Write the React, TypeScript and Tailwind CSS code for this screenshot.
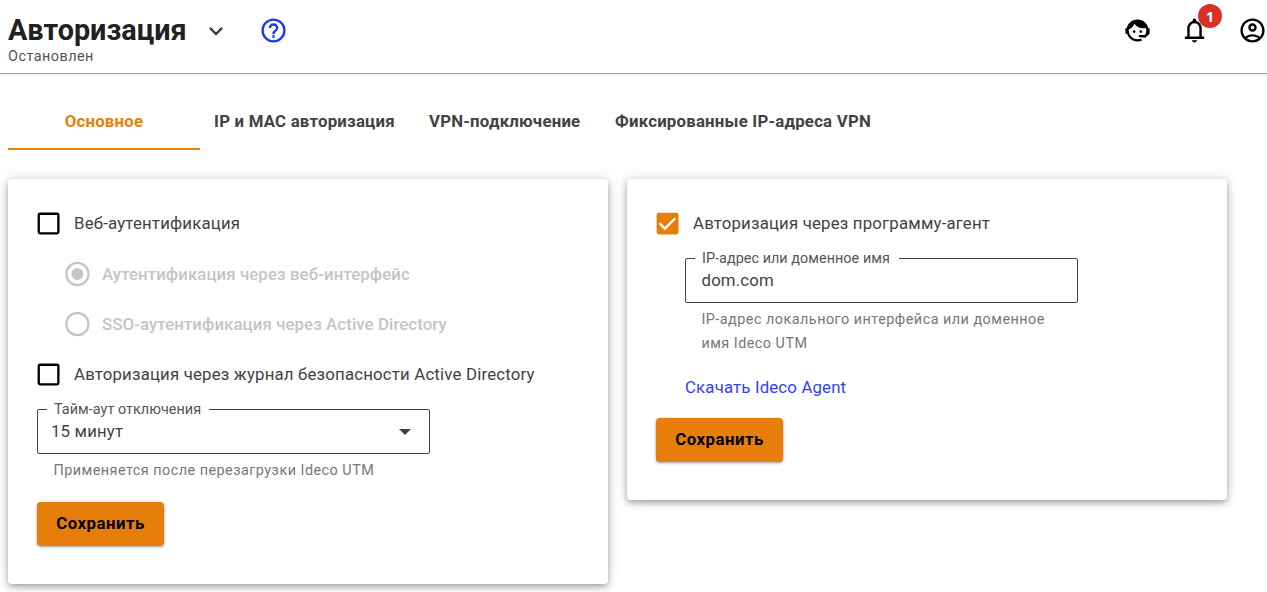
import React from "react";

const ICONS = {
  help: "M11,18H13V16H11V18M12,2A10,10 0 0,0 2,12A10,10 0 0,0 12,22A10,10 0 0,0 22,12A10,10 0 0,0 12,2M12,20C7.59,20 4,16.41 4,12C4,7.59 7.59,4 12,4C16.41,4 20,7.59 20,12C20,16.41 16.41,20 12,20M12,6A4,4 0 0,0 8,10H10A2,2 0 0,1 12,8A2,2 0 0,1 14,10C14,12 11,11.75 11,15H13C13,12.75 16,12.5 16,10A4,4 0 0,0 12,6Z",
  chevron: "M7.41 8.59 12 13.17l4.59-4.58L18 10l-6 6-6-6 1.41-1.41z",
  agent: "M18.72,14.76C19.07,13.91 19.26,13 19.26,12C19.26,11.28 19.15,10.59 18.96,9.95C18.31,10.1 17.63,10.18 16.92,10.18C13.86,10.18 11.15,8.67 9.5,6.34C8.61,8.5 6.91,10.26 4.77,11.22C4.73,11.47 4.73,11.74 4.73,12A7.27,7.27 0 0,0 12,19.27C13.05,19.27 14.06,19.04 14.97,18.63C15.54,19.72 15.8,20.26 15.78,20.26C14.14,20.81 12.87,21.08 12,21.08C9.58,21.08 7.27,20.13 5.57,18.42C4.53,17.38 3.76,16.11 3.33,14.73H2V10.18H3.09C3.93,6.04 7.6,2.92 12,2.92C14.4,2.92 16.71,3.87 18.42,5.58C19.69,6.84 20.54,8.45 20.89,10.18H22V14.67H22V14.69L22,14.73H21.94L18.38,18L13.08,17.4V15.73H17.91L18.72,14.76M9.27,11.77C9.57,11.77 9.86,11.89 10.07,12.11C10.28,12.32 10.4,12.61 10.4,12.91C10.4,13.21 10.28,13.5 10.07,13.71C9.86,13.92 9.57,14.04 9.27,14.04C8.64,14.04 8.13,13.54 8.13,12.91C8.13,12.28 8.64,11.77 9.27,11.77M14.72,11.77C15.35,11.77 15.85,12.28 15.85,12.91C15.85,13.54 15.35,14.04 14.72,14.04C14.09,14.04 13.58,13.54 13.58,12.91A1.14,1.14 0 0,1 14.72,11.77Z",
  bell: "M4 19v-2h2v-7q0-2.075 1.25-3.687Q8.5 4.7 10.5 4.2v-.7q0-.625.438-1.062Q11.375 2 12 2t1.063.438q.437.437.437 1.062v.7q2 .5 3.25 2.113Q18 7.925 18 10v7h2v2Zm8 3q-.825 0-1.412-.587Q10 20.825 10 20h4q0 .825-.587 1.413Q12.825 22 12 22Zm-4-5h8v-7q0-1.65-1.175-2.825Q13.65 6 12 6q-1.65 0-2.825 1.175Q8 8.35 8 10Z",
  account: "M12 2C6.48 2 2 6.48 2 12s4.48 10 10 10 10-4.48 10-10S17.52 2 12 2zM7.35 18.5C8.66 17.56 10.26 17 12 17s3.34.56 4.65 1.5C15.34 19.44 13.74 20 12 20s-3.34-.56-4.65-1.5zm10.79-1.38C16.45 15.8 14.32 15 12 15s-4.45.8-6.14 2.12C4.7 15.73 4 13.95 4 12c0-4.42 3.58-8 8-8s8 3.58 8 8c0 1.95-.7 3.73-1.86 5.12zM12 6c-1.93 0-3.5 1.57-3.5 3.5S10.07 13 12 13s3.5-1.57 3.5-3.5S13.93 6 12 6zm0 5c-.83 0-1.5-.67-1.5-1.5S11.17 8 12 8s1.5.67 1.5 1.5S12.83 11 12 11z",
};

function Icon({ d, className }: { d: string; className: string }) {
  return (
    <svg viewBox="0 0 24 24" fill="currentColor" className={`block shrink-0 ${className}`}>
      <path d={d} />
    </svg>
  );
}

function Checkbox({ label, checked = false }: { label: string; checked?: boolean }) {
  return (
    <label className="flex h-6 items-center pt-px">
      <svg viewBox="0 0 23 23" fill="none" className="size-[23px] shrink-0">
        {checked ? (
          <>
            <rect x="0.6" y="0.8" width="21.9" height="21.7" rx="2.4" fill="#e77e0a" />
            <path d="M3.6 11.3 8.9 16.6 19.2 6.2" stroke="#fff" strokeWidth="2.3" />
          </>
        ) : (
          <rect x="1.75" y="1.75" width="19.6" height="19.6" rx="1.3" stroke="#000" strokeWidth="2.3" />
        )}
      </svg>
      <span className="ml-[14px] text-[16.8px] tracking-[0.011em] whitespace-nowrap text-[#424242]">{label}</span>
    </label>
  );
}

function Radio({ label, checked = false }: { label: string; checked?: boolean }) {
  return (
    <label className="flex h-6 items-center text-[#c4c4c4]">
      <svg viewBox="0 0 25 25" fill="none" className="size-[25px] shrink-0">
        <circle cx="12.4" cy="12" r="11.1" stroke="currentColor" strokeWidth="2.2" />
        {checked && <circle cx="12.4" cy="12" r="6" fill="currentColor" />}
      </svg>
      <span className="ml-3 pt-px text-[16.8px] font-medium tracking-[0.1px] whitespace-nowrap">{label}</span>
    </label>
  );
}

function Field({ label, labelClass, children }: { label: string; labelClass: string; children: React.ReactNode }) {
  return (
    <div className="relative flex h-[45px] w-[393px] items-center rounded-[2px] border border-[#424242]">
      <span className={`absolute -top-[9px] left-[9px] bg-white pl-[7px] text-[14.4px] leading-[18px] tracking-[0.04px] whitespace-nowrap text-[#555] ${labelClass}`}>
        {label}
      </span>
      {children}
    </div>
  );
}

function SaveButton() {
  return (
    <button className="block h-11 w-[127px] rounded-[4px] bg-[#e77e0a] text-[16.8px] font-bold tracking-[0.5px] text-black shadow-[0_1px_3px_rgba(0,0,0,0.4)]">
      Сохранить
    </button>
  );
}

const card = "w-[600px] rounded-[4px] bg-white pl-[29px] pt-8 shadow-[0_3px_6px_rgba(0,0,0,0.3),0_0_14px_rgba(0,0,0,0.14)]";

export default function App() {
  return (
    <div className="h-[592px] w-full overflow-hidden bg-white font-['Roboto',sans-serif] text-[#424242]">
      <header className="flex h-[74px] items-start justify-between border-b border-[#a5a5a5] pl-2 shadow-[0_1px_2px_rgba(0,0,0,0.1)]">
        <div>
          <div className="flex h-[46px] items-center pt-[15px]">
            <h1 className="w-[193px] pb-0.5 text-[28.8px] leading-8 font-bold whitespace-nowrap text-[#212121]">Авторизация</h1>
            <Icon d={ICONS.chevron} className="ml-px size-7" />
            <Icon d={ICONS.help} className="ml-[28.5px] size-[29px] text-[#1a35ff]" />
          </div>
          <p className="pt-px text-[14.4px] leading-5 tracking-[0.48px] text-[#555]">Остановлен</p>
        </div>
        <div className="flex pt-4 text-black">
          <Icon d={ICONS.agent} className="size-[29px]" />
          <div className="relative ml-7">
            <Icon d={ICONS.bell} className="size-[29px]" />
            <span className="absolute -top-3 left-[18px] flex size-6 items-center justify-center rounded-full bg-[#d93025] font-['Open_Sans',sans-serif] text-[14px] font-bold text-white">
              1
            </span>
          </div>
          <Icon d={ICONS.account} className="ml-[29px] size-[29px]" />
        </div>
      </header>

      <nav className="mt-[19px] ml-2 flex h-[57px] text-[16.8px] leading-6 font-bold tracking-[0.013em] whitespace-nowrap">
        <div className="w-48 border-b-2 border-[#e77e0a] pt-4 text-center text-[#e77e0a]">Основное</div>
        <div className="ml-[14px] w-[215px] pt-4">IP и MAC авторизация</div>
        <div className="w-[186px] pt-4">VPN-подключение</div>
        <div className="pt-4">Фиксированные IP-адреса VPN</div>
      </nav>

      <main className="mt-[29px] ml-2 flex items-start gap-[19px]">
        <section className={`h-[405px] ${card}`}>
          <Checkbox label="Веб-аутентификация" />
          <div className="mt-[27px] ml-7 flex flex-col gap-[26px]">
            <Radio label="Аутентификация через веб-интерфейс" checked />
            <Radio label="SSO-аутентификация через Active Directory" />
          </div>
          <div className="mt-[26px]">
            <Checkbox label="Авторизация через журнал безопасности Active Directory" />
          </div>
          <div className="mt-[23px]">
            <Field label="Тайм-аут отключения" labelClass="w-[162px]">
              <span className="ml-[13px] text-[16.8px] tracking-[0.01em]">15 минут</span>
              <span className="mr-[18px] ml-auto border-x-[6px] border-t-[6px] border-x-transparent border-t-[#424242]" />
            </Field>
          </div>
          <p className="mt-[5px] ml-[16.4px] text-[14.4px] leading-6 tracking-[0.48px] text-[#777]">Применяется после перезагрузки Ideco UTM</p>
          <div className="mt-[19px]">
            <SaveButton />
          </div>
        </section>

        <section className={`h-[321px] ${card}`}>
          <Checkbox label="Авторизация через программу-агент" checked />
          <div className="mt-[23px] ml-[29px]">
            <Field label="IP-адрес или доменное имя" labelClass="w-[204px]">
              <span className="ml-[15.5px] text-[16.8px] tracking-[0.01em]">dom.com</span>
            </Field>
            <p className="mt-[5px] ml-[16.4px] w-[360px] text-[14.4px] leading-6 tracking-[0.48px] text-[#777]">
              IP-адрес локального интерфейса или доменное имя Ideco UTM
            </p>
            <a className="mt-[19px] block text-[16.8px] leading-6 tracking-[0.01em] text-[#2f3fff]">Скачать Ideco Agent</a>
          </div>
          <div className="mt-[19px]">
            <SaveButton />
          </div>
        </section>
      </main>
    </div>
  );
}
